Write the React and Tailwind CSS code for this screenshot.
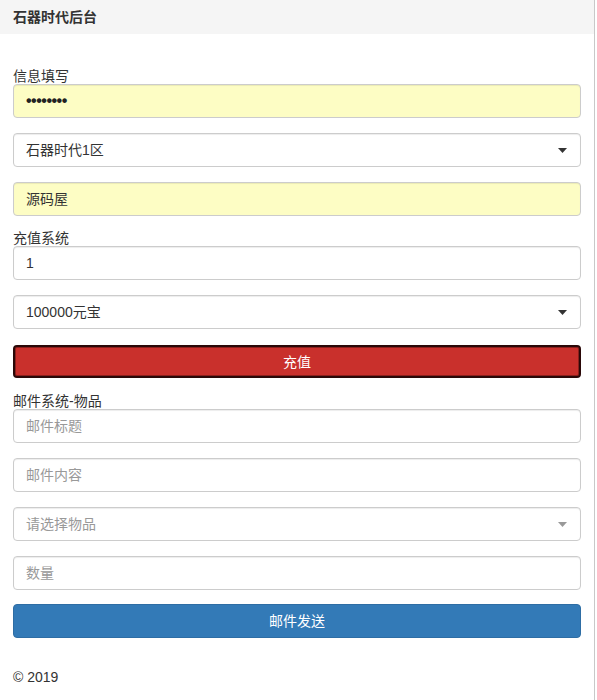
const font = { fontFamily: '"Liberation Sans", "Noto Sans CJK SC", sans-serif' };

function Field({ value, placeholder, yellow, password }) {
  return (
    <div
      className={`flex h-[34px] items-center rounded-[4px] border border-[#cccccc] px-3 text-sm shadow-[inset_0_1px_1px_rgba(0,0,0,0.075)] ${
        yellow ? "bg-[#fdfdc4]" : "bg-white"
      } ${value ? "text-[#333]" : "text-[#999]"}`}
    >
      {password ? (
        <span className="text-[16px] font-bold tracking-[-0.5px] text-[#222]">{value}</span>
      ) : (
        value || placeholder
      )}
    </div>
  );
}

function Select({ value, placeholder }) {
  return (
    <div
      className={`flex h-[34px] items-center justify-between rounded-[4px] border border-[#cccccc] bg-white pl-3 pr-[13px] text-sm shadow-[inset_0_1px_1px_rgba(0,0,0,0.075)] ${
        value ? "text-[#333]" : "text-[#999]"
      }`}
    >
      <span>{value || placeholder}</span>
      <svg width="9" height="5" viewBox="0 0 9 5">
        <path d="M0 0h9L4.5 5z" fill={value ? "#333" : "#999"} />
      </svg>
    </div>
  );
}

export default function App() {
  return (
    <div className="min-h-[700px] w-[595px] border-r border-[#c8c8c8] bg-white text-[#333]" style={font}>
      <div className="flex h-[34px] items-center bg-[#f5f5f5] px-[13px] text-sm font-bold text-[#333]">
        石器时代后台
      </div>
      <div className="flex flex-col px-[13px] pt-[35px]">
        <div className="text-sm leading-[15px]">信息填写</div>
        <Field value="••••••••" yellow password />
        <div className="mt-[15px]">
          <Select value="石器时代1区" />
        </div>
        <div className="mt-[15px]">
          <Field value="源码屋" yellow />
        </div>
        <div className="mt-[15px] text-sm leading-[15px]">充值系统</div>
        <Field value="1" />
        <div className="mt-[15px]">
          <Select value="100000元宝" />
        </div>
        <button className="mt-[16px] h-[33px] rounded-[4px] border-2 border-[#2a0808] bg-[#c9302c] text-sm text-white shadow-[inset_0_0_0_1px_#8b1f1c]">
          充值
        </button>
        <div className="mt-[16px] text-sm leading-[15px]">邮件系统-物品</div>
        <Field placeholder="邮件标题" />
        <div className="mt-[15px]">
          <Field placeholder="邮件内容" />
        </div>
        <div className="mt-[15px]">
          <Select placeholder="请选择物品" />
        </div>
        <div className="mt-[15px]">
          <Field placeholder="数量" />
        </div>
        <button className="mt-[14px] h-[34px] rounded-[4px] border border-[#2e6da4] bg-[#337ab7] text-sm text-white">
          邮件发送
        </button>
        <div className="mt-[29px] text-sm leading-5 text-[#333]">© 2019</div>
      </div>
    </div>
  );
}
